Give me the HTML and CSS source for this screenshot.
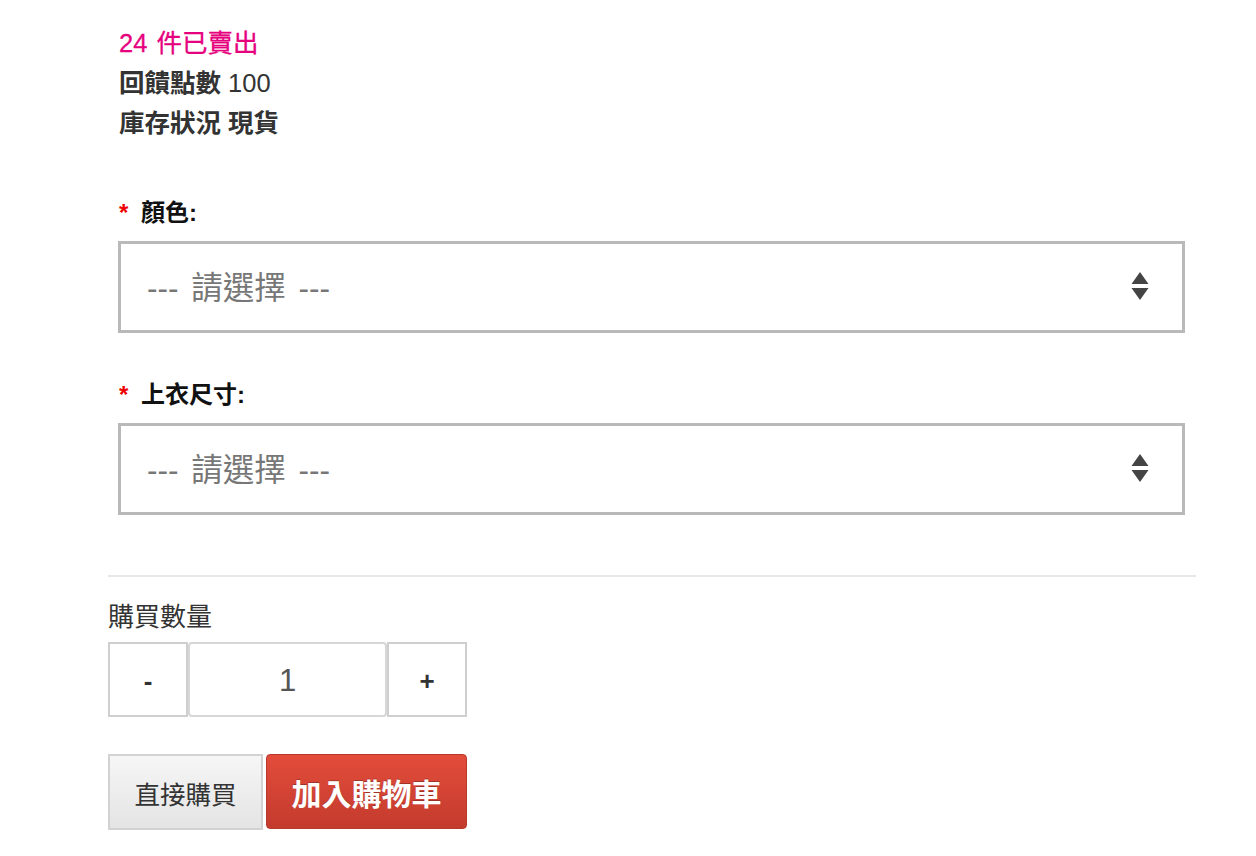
FILE: index.html
```html
<!DOCTYPE html>
<html lang="zh-Hant">
<head>
<meta charset="utf-8">
<title>商品選項</title>
<link rel="stylesheet" href="styles.css">
</head>
<body>
<div class="product">
  <div class="info">
    <div class="sold">24 件已賣出</div>
    <div class="line"><b>回饋點數</b> 100</div>
    <div class="line"><b>庫存狀況</b> <b>現貨</b></div>
  </div>

  <div class="options">
    <div class="field">
      <label class="label"><span class="req">*</span> 顏色:</label>
      <div class="select-wrap">
        <select class="select"><option>--- 請選擇 ---</option></select>
        <svg class="arrows" width="20" height="32" viewBox="0 0 20 32"><path d="M10 1 L18.5 13 L1.5 13 Z M1.5 17 L18.5 17 L10 29 Z" fill="#444"/></svg>
      </div>
    </div>
    <div class="field">
      <label class="label"><span class="req">*</span> 上衣尺寸:</label>
      <div class="select-wrap">
        <select class="select"><option>--- 請選擇 ---</option></select>
        <svg class="arrows" width="20" height="32" viewBox="0 0 20 32"><path d="M10 1 L18.5 13 L1.5 13 Z M1.5 17 L18.5 17 L10 29 Z" fill="#444"/></svg>
      </div>
    </div>
  </div>

  <div class="purchase">
    <div class="qty-label">購買數量</div>
    <div class="qty">
      <button class="qty-btn">-</button>
      <input class="qty-input" type="text" value="1">
      <button class="qty-btn">+</button>
    </div>
    <div class="actions">
      <button class="btn btn-buy">直接購買</button>
      <button class="btn btn-cart">加入購物車</button>
    </div>
  </div>
</div>
</body>
</html>
```

FILE: styles.css
```css
* { box-sizing: border-box; }

body {
  margin: 0;
  background: #fff;
  font-family: "Liberation Sans", "Noto Sans CJK TC", sans-serif;
  color: #333;
}

.product {
  width: 1088px;
  margin-left: 108px;
}

.info {
  padding: 23px 0 0 11px;
  font-size: 25.5px;
  line-height: 40px;
}

.sold {
  color: #e6007e;
  word-spacing: 2px;
  -webkit-text-stroke: 0.3px #e6007e;
}

.line b { font-weight: bold; }

.options {
  padding: 50px 11px 0 10px;
  display: flex;
  flex-direction: column;
  gap: 42px;
}

.label {
  display: block;
  height: 40px;
  font-size: 24px;
  line-height: 40px;
  font-weight: bold;
  color: #111;
  padding-left: 1px;
  margin-bottom: 8px;
}

.req {
  color: #e00;
  font-weight: bold;
  margin-right: 6px;
}

.select-wrap {
  position: relative;
}

.select {
  display: block;
  width: 100%;
  height: 92px;
  -webkit-appearance: none;
  appearance: none;
  border: 3px solid #b9b9b9;
  border-radius: 0;
  background: #fff;
  padding: 1px 60px 0 26px;
  font-family: "Liberation Sans", "Noto Sans CJK TC", sans-serif;
  font-size: 31.5px;
  word-spacing: 4px;
  color: #777;
  outline: none;
}

.arrows {
  position: absolute;
  right: 35px;
  top: 30px;
  pointer-events: none;
}

.purchase {
  margin-top: 60px;
  border-top: 2px solid #e8e8e8;
  padding-top: 20px;
}

.qty-label {
  font-size: 26px;
  line-height: 40px;
  color: #333;
}

.qty {
  display: flex;
  margin-top: 5px;
  height: 75px;
}

.qty-btn {
  width: 80px;
  height: 75px;
  border: 2px solid #cfcfcf;
  background: #fff;
  font-family: "Liberation Sans", "Noto Sans CJK TC", sans-serif;
  font-size: 26px;
  font-weight: bold;
  color: #333;
  padding: 3px 0 0;
}

.qty-input {
  width: 199px;
  height: 75px;
  border: 2px solid #d6d6d6;
  border-radius: 4px;
  text-align: center;
  font-family: "Liberation Sans", "Noto Sans CJK TC", sans-serif;
  font-size: 31px;
  color: #555;
  outline: none;
  padding: 3px 0 0;
  margin: 0;
}

.actions {
  display: flex;
  gap: 3px;
  margin-top: 37px;
}

.btn {
  height: 76px;
  font-family: "Liberation Sans", "Noto Sans CJK TC", sans-serif;
  cursor: pointer;
  padding: 0;
}

.btn-buy {
  width: 155px;
  border: 2px solid #d2d2d2;
  background: linear-gradient(#f6f6f6, #e4e4e4);
  color: #333;
  font-size: 25.5px;
}

.btn-cart {
  width: 201px;
  height: 75px;
  border: 1px solid #b8382b;
  border-radius: 4px;
  background: linear-gradient(#e34c3b, #c33b2d);
  color: #fff;
  font-size: 30px;
  font-weight: bold;
  text-shadow: 0 -1px 0 rgba(0,0,0,0.25);
}
```
